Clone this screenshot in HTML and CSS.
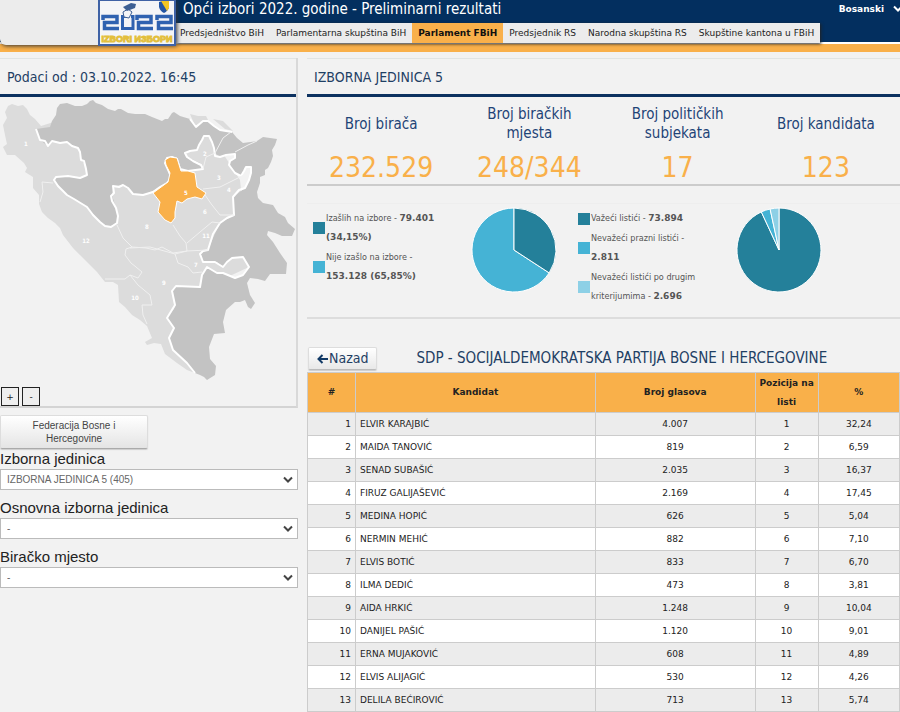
FILE: index.html
```html
<!DOCTYPE html>
<html lang="bs">
<head>
<meta charset="utf-8">
<meta name="viewport" content="width=device-width, initial-scale=1">
<title>Opći izbori 2022. godine - Preliminarni rezultati</title>
<link rel="stylesheet" href="styles.css">
</head>
<body>
<header class="site-header">
  <div class="brand">
    <svg class="logo" viewBox="0 0 78 46" role="img" aria-label="Izbori 2022">
      <rect x="1" y="0" width="76" height="45" fill="#f4f5f7" stroke="#3f62a5" stroke-width="2"/>
      <g fill="none" stroke="#2f62b0" stroke-width="3.500">
        <path d="M5 20V16.500H19V22.500H6.500V28.500H21"/>
        <path d="M39 20V16.500H53V22.500H40.500V28.500H55"/>
        <path d="M59 20V16.500H73V22.500H60.500V28.500H75"/>
        <path d="M29 16.500H24.500V28.500H35V16.500H33" stroke-width="3"/>
      </g>
      <path d="M25 12l5-3 4 3-3 6-5-1z" fill="#f4f5f7" stroke="#3d5f93"/>
      <path d="M25 7l8-4 5 1-1 4-8 3z" fill="#3d5f93"/>
      <path d="M61 2q5-2 10 0v5q-1 4-5 6-4-2-5-6z" fill="#2456a4"/>
      <path d="M63 1h8v7l-2 3z" fill="#f3c623"/>
      <text x="39" y="42" text-anchor="middle" class="logo-text">IZBORI ИЗБОРИ</text>
    </svg>
  </div>
  <div class="header-main">
    <div class="title-row">
      <h1>Opći izbori 2022. godine - Preliminarni rezultati</h1>
      <button class="lang" type="button">Bosanski
        <svg viewBox="0 0 10 8" aria-hidden="true"><path d="M1 1.500L5 5.500L9 1.500" fill="none" stroke="#fff" stroke-width="2"/></svg>
      </button>
    </div>
    <nav class="tabs">
      <a href="#">Predsjedništvo BiH</a>
      <a href="#">Parlamentarna skupština BiH</a>
      <a href="#" class="active">Parlament FBiH</a>
      <a href="#">Predsjednik RS</a>
      <a href="#">Narodna skupština RS</a>
      <a href="#">Skupštine kantona u FBiH</a>
    </nav>
  </div>
</header>
<main class="layout">
  <aside>
    <section class="map-panel">
      <h2 class="panel-title">Podaci od : 03.10.2022. 16:45</h2>
      <svg class="map" viewBox="0 97 296 289" role="img" aria-label="Karta izbornih jedinica">
        <path class="fed" d="M5 112L8 106L12 104L18 106L23 105L27 109L30 115L35 119L41 126L60 120L150 130L208 130L240 180L249 267L200 290L195 373L187 370L177 363L165 354L161 344L154 343L147 345L145 342L152 338L147 326L140 320L132 315L125 307L119 302L118 285L113 282L105 282L97 272L80 255L73 248L63 235L60 228L55 223L48 218L42 212L39 204L39 195L33 188L33 177L25 172L27 168L24 163L15 155L7 155L3 147L7 144L5 135L3 125L7 118Z"/>
        <path class="fed" d="M190 114L198 116L206 116L208 120L200 123L195 126Z"/>
        <path class="fed" d="M213 119L223 121L228 126L233 131L225 129Z"/>
        <path class="rs" d="M36 129L50 127L52 121L56 115L57 108L60 104L67 103L75 106L82 106L87 104L90 101L93 100L96 103L102 105L108 109L115 111L118 109L121 109L128 113L135 114L145 114L152 117L162 121L165 119L168 119L172 113L174 112L180 116L190 119L196 127L203 121L208 121L214 126L220 130L232 132L237 138L243 143L257 141L263 137L270 138L277 139L275 145L272 150L273 156L271 162L268 168L265 170L265 175L260 177L260 183L257 192L258 198L263 203L273 205L278 213L285 217L288 223L295 229L292 236L282 236L275 233L268 231L267 235L273 242L280 253L287 263L286 274L270 274L265 281L258 279L250 278L247 283L250 295L255 303L251 309L248 307L245 300L240 302L235 302L226 310L223 322L225 333L214 334L209 347L210 359L216 366L215 375L207 380L204 377L200 375L195 373L187 363L173 350L169 338L174 328L167 318L174 309L175 305L172 293L175 287L200 287L202 275L207 267L217 273L223 273L235 278L243 275L249 267L243 257L232 258L227 262L223 267L217 262L203 262L200 253L208 250L213 238L220 223L234 215L233 197L245 188L250 178L251 167L245 168L242 176L235 173L229 163L235 158L235 154L220 157L215 153L212 142L207 135L202 140L197 150L185 153L187 157L200 163L203 169L182 171L177 158L170 157L165 163L168 170L170 180L155 190L143 195L133 194L123 185L113 186L112 195L117 212L117 223L108 227L100 222L87 207L67 195L55 183L55 177L80 177L87 175L86 165L81 160L78 148L72 146L67 143L52 141L48 146L40 140Z"/>
        <path class="border-major" d="M36 129L40 140L45 141L48 146L52 141L60 143L67 142L72 146L78 148L80 152L81 160L84 161L86 169L87 175L80 178L68 176L56 177L54 180L58 186L67 195L74 199L87 207L93 215L100 222L105 226L111 227L117 223L118 216L116 208L112 201L111 196L114 193L113 186L119 187L123 185L128 188L133 194L143 195L153 192L160 187L167 183L170 180L170 174L165 163L167 158L172 157L177 159L180 169L188 171L203 169L201 165L193 161L187 157L185 153L190 151L197 150L199 145L202 140L204 136L209 136L212 142L214 148L215 156L220 157L226 155L235 154L235 158L230 161L229 165L235 173L241 176L244 171L246 167L251 167L251 173L249 180L245 188L239 190L233 197L234 215L227 218L220 223L213 234L208 250L203 251L200 254L203 262L215 262L223 267L227 262L232 258L243 257L249 267L243 275L235 278L223 273L217 273L207 267L202 275L200 287L176 286L172 291L175 305L167 318L174 328L169 338L173 350L187 363L195 373"/>
        <path class="border-major" d="M190 119L196 127L203 121L208 121L214 126L220 130L232 132"/>
        <path class="border-minor" d="M53 183L42 182L43 192L40 202M117 225L123 238L132 247L146 248L155 250L162 247L173 253L187 251L186 243L180 236L173 225M132 247L126 249L125 255L131 263L136 267L142 272L138 278L130 275L125 279L105 279M130 248L150 247L175 254L187 251L208 250M187 243L200 232L212 222L220 223M205 195L212 205L220 215L234 215M203 189L220 187L242 176M203 169L206 157L215 153M215 153L223 138L231 132M235 152L248 145L257 141M175 254L178 263L188 267L193 273L202 272M130 275L138 285L150 295L152 305L142 305L143 315L147 324"/>
        <path class="selected" d="M165 160L170 157L177 158L181 171L188 171L195 173L197 187L206 193L202 199L195 197L187 199L182 203L177 201L175 212L175 218L171 223L165 220L158 212L160 202L153 193L168 182L170 173L166 165Z"/>
        <g class="map-label"><text x="26" y="146">1</text><text x="205" y="156">2</text><text x="219" y="180">3</text><text x="229" y="192">4</text><text x="186" y="195">5</text><text x="205" y="214">6</text><text x="196" y="267">7</text><text x="147" y="229">8</text><text x="164" y="285">9</text><text x="135" y="300">10</text><text x="206" y="238">11</text><text x="86" y="243">12</text></g>
      </svg>
      <div class="zoom-buttons"><button type="button">+</button><button type="button">-</button></div>
    </section>
    <form class="filters">
      <button class="entity" type="button">Federacija Bosne i Hercegovine</button>
      <label for="unit">Izborna jedinica</label>
      <div class="select"><select id="unit"><option>IZBORNA JEDINICA 5 (405)</option></select><svg viewBox="0 0 10 8" aria-hidden="true"><path d="M1 1.500L5 5.500L9 1.500"/></svg></div>
      <label for="base">Osnovna izborna jedinica</label>
      <div class="select"><select id="base"><option>-</option></select><svg viewBox="0 0 10 8" aria-hidden="true"><path d="M1 1.500L5 5.500L9 1.500"/></svg></div>
      <label for="station">Biračko mjesto</label>
      <div class="select"><select id="station"><option>-</option></select><svg viewBox="0 0 10 8" aria-hidden="true"><path d="M1 1.500L5 5.500L9 1.500"/></svg></div>
    </form>
  </aside>
  <div class="results">
    <section class="summary">
      <h2 class="panel-title">IZBORNA JEDINICA 5</h2>
      <dl class="stats">
        <div><dt>Broj birača</dt><dd>232.529</dd></div>
        <div><dt>Broj biračkih mjesta</dt><dd>248/344</dd></div>
        <div><dt>Broj političkih subjekata</dt><dd>17</dd></div>
        <div><dt>Broj kandidata</dt><dd>123</dd></div>
      </dl>
    </section>
    <section class="charts">
      <div class="chart">
        <ul class="legend">
          <li><i class="dark"></i><span>Izašlih na izbore - <b>79.401 (34,15%)</b></span></li>
          <li><i class="mid"></i><span>Nije izašlo na izbore - <b>153.128 (65,85%)</b></span></li>
        </ul>
        <svg class="pie" viewBox="-43 -43 86 86" role="img" aria-label="Izlaznost">
          <path class="mid" d="M0 0L35.200 22.900A42 42 0 1 1 0 -42Z"/>
          <path class="dark" d="M0 0V-42A42 42 0 0 1 35.200 22.900Z"/>
        </svg>
      </div>
      <div class="chart chart-wide">
        <ul class="legend">
          <li><i class="dark"></i><span>Važeći listići - <b>73.894</b></span></li>
          <li><i class="mid"></i><span>Nevažeći prazni listići - <b>2.811</b></span></li>
          <li><i class="light"></i><span>Nevažeći listići po drugim kriterijumima - <b>2.696</b></span></li>
        </ul>
        <svg class="pie" viewBox="-43 -43 86 86" role="img" aria-label="Listići">
          <path class="dark" d="M0 0V-42A42 42 0 1 1 -17.700 -38.100Z"/>
          <path class="mid" d="M0 0L-17.700 -38.100A42 42 0 0 1 -8.900 -41Z"/>
          <path class="light" d="M0 0L-8.900 -41A42 42 0 0 1 0 -42Z"/>
        </svg>
      </div>
    </section>
    <div class="list-head">
      <button class="back" type="button"><svg viewBox="0 0 11 10" aria-hidden="true"><path d="M5.500 1L1.500 5L5.500 9M1.500 5H11" fill="none" stroke="#123a66" stroke-width="2"/></svg>Nazad</button>
      <h2>SDP - SOCIJALDEMOKRATSKA PARTIJA BOSNE I HERCEGOVINE</h2>
    </div>
    <table>
      <colgroup><col class="c-num"><col class="c-name"><col class="c-votes"><col class="c-pos"><col class="c-pct"></colgroup>
      <thead><tr><th>#</th><th>Kandidat</th><th>Broj glasova</th><th>Pozicija na listi</th><th>%</th></tr></thead>
      <tbody>
        <tr><td>1</td><td>ELVIR KARAJBIĆ</td><td>4.007</td><td>1</td><td>32,24</td></tr>
        <tr><td>2</td><td>MAIDA TANOVIĆ</td><td>819</td><td>2</td><td>6,59</td></tr>
        <tr><td>3</td><td>SENAD SUBAŠIĆ</td><td>2.035</td><td>3</td><td>16,37</td></tr>
        <tr><td>4</td><td>FIRUZ GALIJAŠEVIĆ</td><td>2.169</td><td>4</td><td>17,45</td></tr>
        <tr><td>5</td><td>MEDINA HOPIĆ</td><td>626</td><td>5</td><td>5,04</td></tr>
        <tr><td>6</td><td>NERMIN MEHIĆ</td><td>882</td><td>6</td><td>7,10</td></tr>
        <tr><td>7</td><td>ELVIS BOTIĆ</td><td>833</td><td>7</td><td>6,70</td></tr>
        <tr><td>8</td><td>ILMA DEDIĆ</td><td>473</td><td>8</td><td>3,81</td></tr>
        <tr><td>9</td><td>AIDA HRKIĆ</td><td>1.248</td><td>9</td><td>10,04</td></tr>
        <tr><td>10</td><td>DANIJEL PAŠIĆ</td><td>1.120</td><td>10</td><td>9,01</td></tr>
        <tr><td>11</td><td>ERNA MUJAKOVIĆ</td><td>608</td><td>11</td><td>4,89</td></tr>
        <tr><td>12</td><td>ELVIS ALIJAGIĆ</td><td>530</td><td>12</td><td>4,26</td></tr>
        <tr><td>13</td><td>DELILA BEĆIROVIĆ</td><td>713</td><td>13</td><td>5,74</td></tr>
      </tbody>
    </table>
  </div>
</main>
</body>
</html>
```
FILE: styles.css
```css
* { box-sizing: border-box; }

body {
  margin: 0;
  overflow-x: hidden;
  background: #f2f2f2;
  color: #222;
  font: 9px/19px "DejaVu Sans", sans-serif;
}

h1, h2, dl, dd, ul { margin: 0; padding: 0; font-weight: normal; }
h1, h2, .stats, .back { font-family: "DejaVu Sans Condensed", "DejaVu Sans", sans-serif; }
button, select { margin: 0; font: inherit; color: inherit; }

/* Header */
.site-header {
  display: flex;
  align-items: flex-start;
  height: 52px;
  background: linear-gradient(#032f5f 0 42px, #fff 42px 44px, #f9b04a 44px);
}
.brand {
  display: flex;
  justify-content: flex-end;
  flex: none;
  width: 176px;
  height: 45px;
  background: #ececec;
  border-radius: 0 0 0 6px;
  box-shadow: 1px 1px 4px #333;
  z-index: 1;
}
.logo { width: 78px; height: 46px; }
.logo-text { font: bold 9px "Liberation Sans", sans-serif; fill: #e3bf3d; stroke: #e3bf3d; stroke-width: 1; }
.header-main { flex: 1; }
.title-row {
  display: flex;
  justify-content: space-between;
  height: 23px;
  padding-left: 7px;
  color: #fff;
}
h1 { font-size: 15px; line-height: 19px; }
.lang {
  display: flex;
  align-items: center;
  gap: 9px;
  height: 18px;
  margin-right: -3px;
  padding: 0;
  border: 0;
  background: none;
  font-weight: bold;
}
.lang svg { width: 10px; height: 8px; }
.tabs {
  display: flex;
  width: fit-content;
  background: #ececec;
  box-shadow: 1px 1px 3px #222;
}
.tabs a {
  padding: 0 6px;
  color: #222;
  line-height: 20px;
  text-decoration: none;
  white-space: nowrap;
}
.tabs a:first-child { padding-left: 4px; }
.tabs .active { background: #f9b04a; color: #111; font-weight: bold; }

/* Page */
.layout {
  display: grid;
  grid-template-columns: 298fr 593fr;
  gap: 9px;
  padding-top: 6px;
}
.panel-title {
  height: 39px;
  padding-left: 7px;
  border-top: 1px solid #e0e4e4;
  border-bottom: 3px solid #0d3260;
  color: #1f4064;
  font-size: 14px;
  line-height: 36px;
}

/* Map */
.map-panel { border-right: 2px solid #d9d9d9; border-bottom: 2px solid #d4d4d4; }
.map { display: block; width: 100%; }
.fed { fill: #dcdcdc; }
.rs { fill: #c3c3c3; }
.selected { fill: #f9b04a; stroke: #fff; }
.border-major, .border-minor { fill: none; stroke: #fff; stroke-width: 2; stroke-linejoin: round; }
.border-minor { stroke: #f0f0f0; stroke-width: 1; }
.map-label { fill: #fff; font: bold 6px "DejaVu Sans Condensed", sans-serif; text-anchor: middle; }
.zoom-buttons { display: flex; gap: 3px; padding: 1px 1px 0; }
.zoom-buttons button {
  width: 18px;
  height: 19px;
  padding: 0;
  border: 1px solid #222;
  background: #eee;
  line-height: 16px;
}

/* Filters */
.filters {
  display: flex;
  flex-direction: column;
  padding-top: 7px;
  font-family: "Liberation Sans", Arial, sans-serif;
}
.entity {
  width: 148px;
  padding: 3px 20px;
  border: 1px solid #ddd;
  border-bottom-color: #aaa;
  border-radius: 2px;
  background: linear-gradient(#fff, #e4e4e4);
  box-shadow: 0 1px 1px #ccc;
  color: #444;
  font-size: 10px;
  line-height: 13px;
}
.filters label { color: #222; font-size: 15px; line-height: 20px; }
.select { display: grid; align-items: center; margin-bottom: 8px; }
.select select, .select svg { grid-area: 1 / 1; }
.select select {
  appearance: none;
  width: 100%;
  height: 21px;
  padding: 0 6px;
  border: 1px solid #bbb;
  border-radius: 0;
  background: #fff;
  color: #666;
  font-size: 10px;
}
.select svg { justify-self: end; width: 10px; height: 8px; margin-right: 5px; pointer-events: none; }
.select path { fill: none; stroke: #444; stroke-width: 2; }

/* Summary */
.summary { border-bottom: 2px solid #ccc; }
.stats { display: grid; grid-template-columns: repeat(4, 1fr); padding-top: 8px; text-align: center; }
.stats dt {
  display: grid;
  place-items: center;
  height: 38px;
  padding: 0 20px;
  color: #1f4477;
  font-size: 15px;
  line-height: 19px;
}
.stats dd { padding-top: 9px; color: #f9b04a; font-size: 28px; line-height: 32px; }

/* Charts */
.charts {
  display: flex;
  min-height: 116px;
  margin-top: 17px;
  padding: 5px 0 0 6px;
  border-top: 1px solid #eee;
  border-bottom: 2px solid #ddd;
}
.chart { display: flex; justify-content: space-between; width: 244px; }
.chart-wide { margin-left: 21px; }
.legend { width: 132px; color: #555; font-family: "DejaVu Sans Condensed", sans-serif; list-style: none; }
.legend b { font-family: "DejaVu Sans", sans-serif; }
.legend li { display: flex; align-items: center; margin-bottom: 1px; }
.legend i { flex: none; width: 12px; height: 12px; margin-right: 1px; }
.pie { width: 86px; height: 86px; margin-top: -2px; }
.pie path { stroke: #fff; stroke-width: 1; }
.dark { background: #24809a; fill: #24809a; }
.mid { background: #45b3d5; fill: #45b3d5; }
.light { background: #8dd0e6; fill: #8dd0e6; }

/* Candidates */
.list-head { display: flex; align-items: center; gap: 39px; padding: 28px 0 2px 1px; }
.list-head h2 { color: #1f4064; font-size: 15px; line-height: 19px; }
.back {
  display: flex;
  align-items: center;
  gap: 1px;
  height: 23px;
  padding: 0 8px;
  border: 1px solid #ddd;
  border-bottom-color: #bbb;
  border-radius: 2px;
  background: linear-gradient(#fff, #e8e8e8);
  box-shadow: 0 1px 1px #ccc;
  color: #1f4064;
  font-family: "DejaVu Sans Condensed", "DejaVu Sans", sans-serif;
  font-size: 14px;
}
.back svg { width: 11px; height: 10px; }
table { width: 100%; border-collapse: collapse; table-layout: fixed; }
.c-num { width: 48px; }
.c-name { width: 40.5%; }
.c-votes { width: 27%; }
.c-pos { width: 63px; }
th, td { border: 1px solid #ccc; text-align: center; }
th { height: 40px; padding: 0; background: #f9b04a; color: #222; }
td { height: 23px; padding: 0 4px; }
td:first-child { text-align: right; }
td:nth-child(2) { text-align: left; }
tbody tr { background: #fff; }
tbody tr:nth-child(odd) { background: #ececec; }
```
